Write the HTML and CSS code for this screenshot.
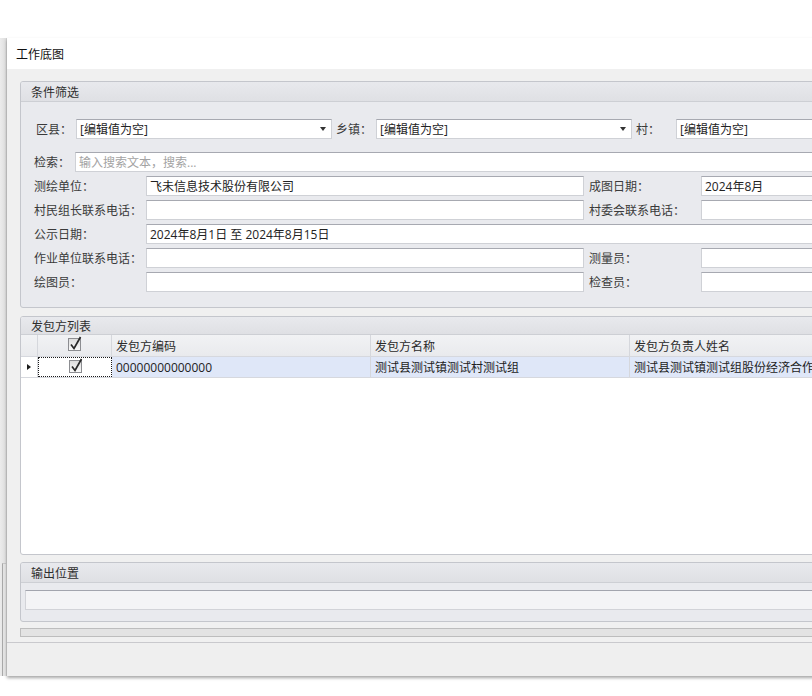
FILE: index.html
```html
<!DOCTYPE html>
<html lang="zh-CN">
<head>
<meta charset="utf-8">
<title>工作底图</title>
<link rel="stylesheet" href="styles.css">
</head>
<body>
<div class="desk">
  <div class="side-strip"><div class="side-lower"></div></div>
  <div class="window">
    <div class="titlebar">工作底图</div>
    <div class="client">

      <section class="group group-filter">
        <div class="group-head">条件筛选</div>
        <div class="group-body">
          <div class="combo-row">
            <span class="combo-label">区县：</span>
            <div class="combo"><span>[编辑值为空]</span><i class="arrow"></i></div>
            <span class="combo-label">乡镇：</span>
            <div class="combo"><span>[编辑值为空]</span><i class="arrow"></i></div>
            <span class="combo-label">村：</span>
            <div class="combo"><span>[编辑值为空]</span><i class="arrow"></i></div>
          </div>
          <div class="search-row">
            <span class="search-label">检索：</span>
            <div class="field search-field"><span class="placeholder">输入搜索文本，搜索...</span></div>
          </div>
          <div class="field-grid">
            <span class="lbl">测绘单位：</span>
            <div class="field">飞未信息技术股份有限公司</div>
            <span class="lbl lbl-right">成图日期：</span>
            <div class="field">2024年8月</div>

            <span class="lbl">村民组长联系电话：</span>
            <div class="field"></div>
            <span class="lbl lbl-right">村委会联系电话：</span>
            <div class="field"></div>

            <span class="lbl">公示日期：</span>
            <div class="field field-wide">2024年8月1日 至 2024年8月15日</div>

            <span class="lbl">作业单位联系电话：</span>
            <div class="field"></div>
            <span class="lbl lbl-right">测量员：</span>
            <div class="field"></div>

            <span class="lbl">绘图员：</span>
            <div class="field"></div>
            <span class="lbl lbl-right">检查员：</span>
            <div class="field"></div>
          </div>
        </div>
      </section>

      <section class="group group-list">
        <div class="group-head">发包方列表</div>
        <div class="grid">
          <div class="grid-row grid-header">
            <div class="cell cell-ind"></div>
            <div class="cell cell-check">
              <svg class="chk" width="14" height="15" viewBox="0 0 14 15"><defs><linearGradient id="cg1" x1="0" y1="0" x2="0" y2="1"><stop offset="0" stop-color="#dcdcdc"/><stop offset="1" stop-color="#fbfbfb"/></linearGradient></defs><rect x="0.5" y="2.5" width="12" height="12" fill="url(#cg1)" stroke="#8c8d91"/><path d="M3 8.5 L6 12.5 L12.5 1" fill="none" stroke="#2a2a2a" stroke-width="1.7"/></svg>
            </div>
            <div class="cell">发包方编码</div>
            <div class="cell">发包方名称</div>
            <div class="cell">发包方负责人姓名</div>
          </div>
          <div class="grid-row grid-data">
            <div class="cell cell-ind"><i class="row-mark"></i></div>
            <div class="cell cell-check cell-focus">
              <svg class="chk" width="14" height="15" viewBox="0 0 14 15"><defs><linearGradient id="cg2" x1="0" y1="0" x2="0" y2="1"><stop offset="0" stop-color="#dcdcdc"/><stop offset="1" stop-color="#fbfbfb"/></linearGradient></defs><rect x="0.5" y="2.5" width="12" height="12" fill="url(#cg2)" stroke="#8c8d91"/><path d="M3 8.5 L6 12.5 L12.5 1" fill="none" stroke="#2a2a2a" stroke-width="1.7"/></svg>
            </div>
            <div class="cell">00000000000000</div>
            <div class="cell">测试县测试镇测试村测试组</div>
            <div class="cell">测试县测试镇测试组股份经济合作社</div>
          </div>
        </div>
      </section>

      <section class="group group-output">
        <div class="group-head">输出位置</div>
        <div class="group-body output-body">
          <div class="field output-field"></div>
        </div>
      </section>

      <div class="progress"></div>
      <div class="footer"></div>
    </div>
  </div>
</div>
</body>
</html>
```

FILE: styles.css
```css
html, body {
  margin: 0;
  padding: 0;
  overflow: hidden;
  background: #ffffff;
}

body {
  font-family: "Open Sans", "Noto Sans CJK SC", "Microsoft YaHei", sans-serif;
  font-size: 12px;
  color: #333;
}

.desk {
  display: flex;
  padding-top: 38px;
  height: 696px;
  box-sizing: border-box;
}

/* window edge peeking out at the left */
.side-strip {
  flex: 0 0 7px;
  height: 638px;
  background: linear-gradient(to right, #ececec, #dedede);
  border-right: 1px solid #d2d2d2;
  box-sizing: border-box;
  display: flex;
  flex-direction: column;
  justify-content: flex-end;
}

.side-lower {
  height: 112px;
  margin-left: 2px;
  border-left: 1px solid #a8a8a8;
  border-top: 1px solid #c8c8c8;
  background: #e4e4e4;
}

.window {
  flex: 0 0 900px;
  height: 638px;
  display: flex;
  flex-direction: column;
  box-shadow: 0 2px 3px rgba(0, 0, 0, 0.35);
}

.titlebar {
  height: 31px;
  line-height: 33px;
  padding-left: 9px;
  background: #ffffff;
  color: #111;
}

.client {
  flex: 1;
  background: #f0f0f0;
  padding: 12px 0 0 13px;
  display: flex;
  flex-direction: column;
}

/* group boxes */
.group {
  width: 880px;
  flex-shrink: 0;
  border: 1px solid #c4c6cc;
  border-radius: 3px;
  background: #e9eaee;
  box-sizing: border-box;
  overflow: hidden;
}

.group-head {
  height: 19px;
  line-height: 21px;
  padding-left: 10px;
  background: linear-gradient(#e8e9ed, #dfe0e4);
  border-bottom: 1px solid #cdcfd4;
  color: #2e2e2e;
  overflow: hidden;
}

.group-filter {
  height: 227px;
}

.group-filter .group-body {
  padding: 17px 0 0 13px;
}

.combo-row {
  display: flex;
  margin-left: 2px;
  height: 20px;
}

.combo-label {
  flex: 0 0 40px;
  margin-left: 4px;
  line-height: 22px;
  color: #3a3a3a;
}

.combo-label:first-child {
  margin-left: 0;
}

.combo,
.field {
  height: 20px;
  box-sizing: border-box;
  background: #ffffff;
  border: 1px solid #cfd1d6;
  border-top-color: #a7a9b1;
  padding-left: 3px;
  line-height: 20px;
  color: #222;
  white-space: nowrap;
  overflow: hidden;
}

.combo {
  flex: 0 0 256px;
  position: relative;
}

.combo .arrow {
  position: absolute;
  right: 5px;
  top: 7px;
  width: 0;
  height: 0;
  border-left: 3.5px solid transparent;
  border-right: 3.5px solid transparent;
  border-top: 4px solid #333;
}

.search-row {
  display: flex;
  height: 20px;
  margin-top: 13px;
}

.search-label {
  flex: 0 0 41px;
  line-height: 22px;
  color: #3a3a3a;
}

.search-field {
  flex: 1;
}

.placeholder {
  color: #a3a3a3;
}

.field-grid {
  display: grid;
  grid-template-columns: 112px 438px 117px 200px;
  grid-auto-rows: 20px;
  row-gap: 4px;
  margin-top: 4px;
  align-items: start;
}

.lbl {
  color: #3a3a3a;
  white-space: nowrap;
  line-height: 22px;
}

.lbl-right {
  padding-left: 5px;
}

.field-wide {
  grid-column: 2 / 5;
}

/* contractor list */
.group-list {
  height: 239px;
  margin-top: 8px;
  background: #ffffff;
}

.group-list .group-head {
  height: 17px;
  line-height: 19px;
}

.grid {
  background: #ffffff;
}

.grid-row {
  display: grid;
  grid-template-columns: 17px 74px 259px 259px 300px;
  height: 21px;
  border-bottom: 1px solid #d6d8de;
}

.grid-header {
  background: linear-gradient(#f1f2f4, #e9eaed);
}

.grid-data {
  height: 20px;
  background: #dfe7f8;
}

.cell {
  border-right: 1px solid #d5d7dc;
  padding-left: 4px;
  line-height: 23px;
  white-space: nowrap;
  overflow: hidden;
  color: #222;
}

.grid-data .cell {
  line-height: 22px;
}

.grid-header .cell {
  color: #2a2a2a;
}

.cell-ind {
  padding: 0;
  position: relative;
}

.grid-data .cell-ind {
  background: #ffffff;
}

.row-mark {
  position: absolute;
  left: 6px;
  top: 7px;
  width: 0;
  height: 0;
  border-top: 3.5px solid transparent;
  border-bottom: 3.5px solid transparent;
  border-left: 4px solid #1a1a1a;
}

.cell-check {
  padding: 0;
  display: flex;
  justify-content: center;
  align-items: flex-start;
}

.cell-check .chk {
  margin-top: 1px;
  margin-left: 1px;
}

.cell-focus {
  background: #ffffff;
  border: 1px dotted #1a1a1a;
  box-sizing: border-box;
}

.grid-data .cell-focus .chk {
  margin-top: 0;
}

/* output location */
.group-output {
  height: 60px;
  margin-top: 7px;
}

.output-body {
  padding: 7px 0 0 4px;
}

.output-field {
  background: #f4f4f6;
  border-color: #d2d3d8;
  border-top-color: #a3a5ae;
  width: 860px;
}

.progress {
  width: 880px;
  height: 9px;
  flex-shrink: 0;
  margin-top: 6px;
  box-sizing: border-box;
  background: #e3e3e3;
  border: 1px solid #bdbdbd;
}

.footer {
  flex: 1;
  margin: 5px 0 0 -13px;
  border-top: 1px solid #c9c9cd;
  background: #efefef;
}
```
